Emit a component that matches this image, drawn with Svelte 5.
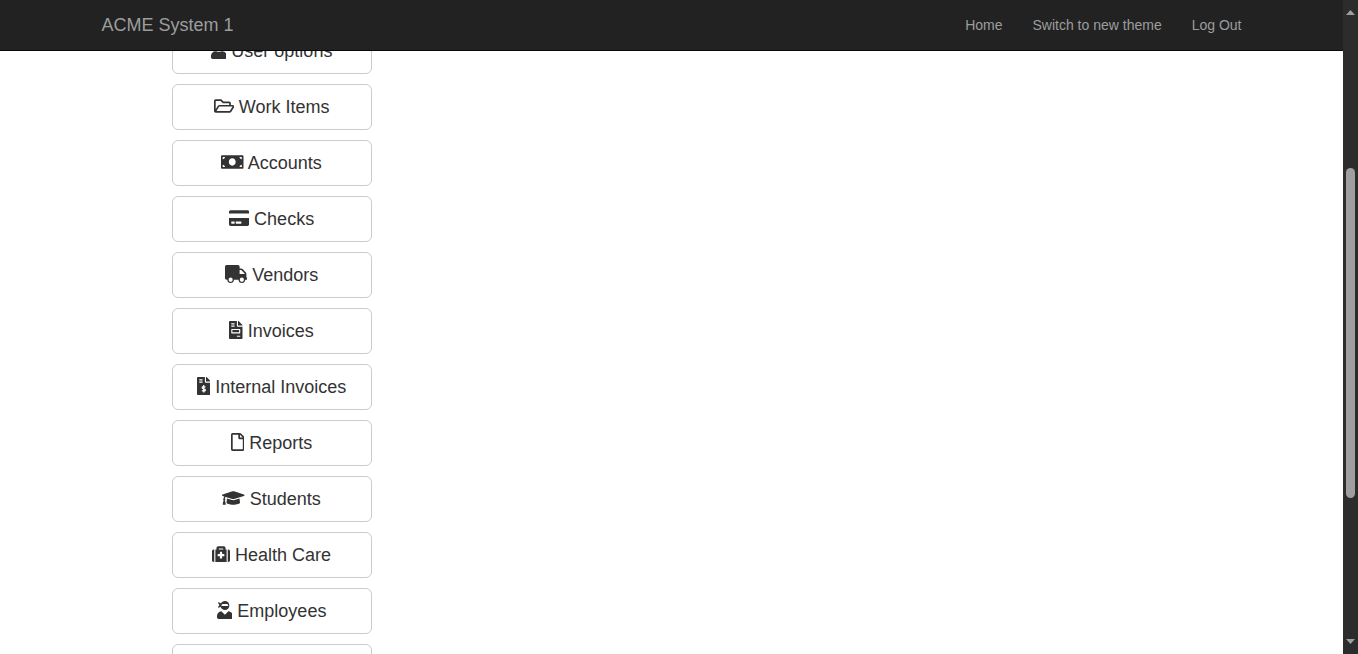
<script>
  const links = ['Home', 'Switch to new theme', 'Log Out'];

  const items = [
    { label: 'User options', w: 448, d: 'M224 256c70.7 0 128-57.3 128-128S294.7 0 224 0 96 57.3 96 128s57.3 128 128 128zm89.6 32h-16.7c-22.2 10.2-46.9 16-72.9 16s-50.6-5.8-72.9-16h-16.7C60.2 288 0 348.2 0 422.4V464c0 26.5 21.5 48 48 48h352c26.5 0 48-21.5 48-48v-41.6c0-74.2-60.2-134.4-134.4-134.4z' },
    { label: 'Work Items', w: 576, d: 'M527.9 224H480v-48c0-26.5-21.5-48-48-48H272l-64-64H48C21.5 64 0 85.5 0 112v288c0 26.5 21.5 48 48 48h400c16.5 0 31.9-8.5 40.7-22.6l79.9-128c20-31.9-3-73.4-40.7-73.4zM48 118c0-3.3 2.7-6 6-6h134.1l64 64H426c3.3 0 6 2.7 6 6v42H152c-16.8 0-32.4 8.8-41.1 23.2L48 351.4zm400 282H72l77.2-128H528z' },
    { label: 'Accounts', w: 640, d: 'M608 64H32C14.33 64 0 78.33 0 96v320c0 17.67 14.33 32 32 32h576c17.67 0 32-14.33 32-32V96c0-17.67-14.33-32-32-32zM48 400v-64c35.35 0 64 28.65 64 64H48zm0-224v-64h64c0 35.35-28.65 64-64 64zm272 184c-55 0-98-46-98-104s43-104 98-104 98 46 98 104-43 104-98 104zm272 40h-64c0-35.35 28.65-64 64-64v64zm0-224c-35.35 0-64-28.65-64-64h64v64z' },
    { label: 'Checks', w: 576, d: 'M0 432c0 26.5 21.5 48 48 48h480c26.5 0 48-21.5 48-48V256H0v176zm192-68c0-6.6 5.4-12 12-12h136c6.6 0 12 5.4 12 12v40c0 6.6-5.4 12-12 12H204c-6.6 0-12-5.4-12-12v-40zm-128 0c0-6.6 5.4-12 12-12h72c6.6 0 12 5.4 12 12v40c0 6.6-5.4 12-12 12H76c-6.6 0-12-5.4-12-12v-40zM576 80v48H0V80c0-26.5 21.5-48 48-48h480c26.5 0 48 21.5 48 48z' },
    { label: 'Vendors', w: 640, d: 'M624 352h-16V243.9c0-12.7-5.1-24.9-14.1-33.9L494 110.1c-9-9-21.2-14.1-33.9-14.1H416V48c0-26.5-21.5-48-48-48H48C21.5 0 0 21.5 0 48v320c0 26.5 21.5 48 48 48h16c0 53 43 96 96 96s96-43 96-96h128c0 53 43 96 96 96s96-43 96-96h48c8.8 0 16-7.2 16-16v-32c0-8.8-7.2-16-16-16zM160 474c-32 0-58-26-58-58s26-58 58-58 58 26 58 58-26 58-58 58zm320 0c-32 0-58-26-58-58s26-58 58-58 58 26 58 58-26 58-58 58zm80-218H416V144h44.1l99.9 99.9V256z' },
    { label: 'Invoices', w: 384, d: 'M288 256H96v64h192v-64zm89-151L279.1 7c-4.5-4.5-10.6-7-17-7H256v128h128v-6.1c0-6.3-2.5-12.4-7-16.9zm-153 31V0H24C10.7 0 0 10.7 0 24v464c0 13.3 10.7 24 24 24h336c13.3 0 24-10.7 24-24V160H248c-13.2 0-24-10.8-24-24zM64 72c0-4.42 3.58-8 8-8h80c4.42 0 8 3.58 8 8v16c0 4.42-3.58 8-8 8H72c-4.42 0-8-3.58-8-8V72zm0 64c0-4.42 3.58-8 8-8h80c4.42 0 8 3.58 8 8v16c0 4.42-3.58 8-8 8H72c-4.42 0-8-3.58-8-8v-16zm256 304c0 4.42-3.58 8-8 8h-80c-4.42 0-8-3.58-8-8v-16c0-4.42 3.58-8 8-8h80c4.42 0 8 3.58 8 8v16zm0-200v96c0 8.84-7.16 16-16 16H80c-8.84 0-16-7.16-16-16v-96c0-8.84 7.16-16 16-16h224c8.84 0 16 7.16 16 16z' },
    { label: 'Internal Invoices', w: 384, cut: 'M238 290c-28-24-92-20-92 14 0 38 94 26 94 66 0 36-68 40-100 14M192 226v218', d: 'M377 105L279.1 7c-4.5-4.5-10.6-7-17-7H256v128h128v-6.1c0-6.3-2.5-12.4-7-16.9zm-153 31V0H24C10.7 0 0 10.7 0 24v464c0 13.3 10.7 24 24 24h336c13.3 0 24-10.7 24-24V160H248c-13.2 0-24-10.8-24-24zM64 72c0-4.42 3.58-8 8-8h80c4.42 0 8 3.58 8 8v16c0 4.42-3.58 8-8 8H72c-4.42 0-8-3.58-8-8V72zm0 80v-16c0-4.42 3.58-8 8-8h80c4.42 0 8 3.58 8 8v16c0 4.42-3.58 8-8 8H72c-4.42 0-8-3.58-8-8z' },
    { label: 'Reports', w: 384, d: 'M369.9 97.9L286 14C277 5 264.8-.1 252.1-.1H48C21.5 0 0 21.5 0 48v416c0 26.5 21.5 48 48 48h288c26.5 0 48-21.5 48-48V131.9c0-12.7-5.1-25-14.1-34zM332.1 128H256V51.9l76.1 76.1zM48 464V48h160v104c0 13.3 10.7 24 24 24h104v288H48z' },
    { label: 'Students', w: 640, d: 'M622.34 153.2L343.4 67.5c-15.2-4.67-31.6-4.67-46.79 0L17.66 153.2c-23.54 7.23-23.54 38.36 0 45.59l48.63 14.94c-10.67 13.19-17.23 29.28-17.88 46.9C38.78 266.15 32 276.11 32 288c0 10.78 5.68 19.85 13.86 25.65L20.33 428.53C18.11 438.52 25.71 448 35.94 448h56.11c10.24 0 17.84-9.48 15.62-19.47L82.14 313.65C90.32 307.85 96 298.78 96 288c0-11.57-6.47-21.25-15.66-26.87.76-15.02 8.44-28.3 20.69-36.72L296.6 284.5c9.06 2.78 26.44 6.25 46.79 0l278.95-85.7c23.55-7.24 23.55-38.36 0-45.6zM352.79 315.09c-28.53 8.76-52.84 3.92-65.59 0l-145.02-44.55L128 384c0 35.35 85.96 64 192 64s192-28.65 192-64l-14.18-113.47-145.03 44.56z' },
    { label: 'Health Care', w: 512, d: 'M96 480h320V128h-32V80c0-26.51-21.49-48-48-48H176c-26.51 0-48 21.49-48 48v48H96v352zm96-384h128v32H192V96zm320 80v256c0 26.51-21.49 48-48 48h-16V128h16c26.51 0 48 21.49 48 48zM64 480H48c-26.51 0-48-21.49-48-48V176c0-26.51 21.49-48 48-48h16v352zm288-208v32c0 8.837-7.163 16-16 16h-48v48c0 8.837-7.163 16-16 16h-32c-8.837 0-16-7.163-16-16v-48h-48c-8.837 0-16-7.163-16-16v-32c0-8.837 7.163-16 16-16h48v-48c0-8.837 7.163-16 16-16h32c8.837 0 16 7.163 16 16v48h48c8.837 0 16 7.163 16 16z' },
    { label: 'Employees', w: 448, d: 'M325.4 289.2L224 390.6 122.6 289.2C54 295.3 0 352.2 0 422.4V464c0 26.5 21.5 48 48 48h352c26.5 0 48-21.5 48-48v-41.6c0-70.2-54-127.1-122.6-133.2zM32 192c27.3 0 51.8-11.5 69.2-29.7 15.1 53.9 64 93.7 122.8 93.7 70.7 0 128-57.3 128-128S294.7 0 224 0c-50.4 0-93.6 29.4-114.5 71.8C92.1 47.8 64 32 32 32c0 33.4 17.1 62.8 43.1 80-26 17.2-43.1 46.6-43.1 80zm132-106h120c20 0 36 20 36 54H128c0-34 16-54 36-54z' },
    { label: '', name: 'More', w: 512, d: '' }
  ];
</script>

<div class="window">
  <div class="page">
    <header class="navbar">
      <div class="container bar">
        <a class="brand" href="#top">ACME System 1</a>
        <nav>
          {#each links as link}
            <a href="#top">{link}</a>
          {/each}
        </nav>
      </div>
    </header>
    <main class="container">
      <div class="menu">
        {#each items as item}
          <button type="button" aria-label={item.name}>
            <svg viewBox="0 0 {item.w} 512" aria-hidden="true">
              <path d={item.d} />
              {#if item.cut}<path class="cut" d={item.cut} />{/if}
            </svg>
            {item.label}
          </button>
        {/each}
      </div>
    </main>
  </div>
  <div class="scrollbar" aria-hidden="true">
    <svg viewBox="0 0 15 16"><path d="M3 15L7.5 10L12 15z" /></svg>
    <div class="track">
      <div class="thumb"></div>
    </div>
    <svg viewBox="0 0 15 16"><path d="M3 1L7.5 6L12 1z" /></svg>
  </div>
</div>

<style>
  :global(body) {
    background: #fff;
  }

  .window {
    display: flex;
    height: 100vh;
    overflow: hidden;
    font-family: "Liberation Sans", Arial, sans-serif;
    color: #333;
  }

  .page {
    display: flex;
    flex-direction: column;
    flex: 1;
    min-width: 0;
  }

  .container {
    box-sizing: border-box;
    width: 100%;
    max-width: 1170px;
    margin: 0 auto;
    padding: 0 15px;
  }

  .navbar {
    position: relative;
    z-index: 1;
    flex: none;
    background: #222;
    border-bottom: 1px solid #080808;
  }

  .bar {
    display: flex;
    align-items: center;
    justify-content: space-between;
    height: 50px;
  }

  .bar a {
    color: #9d9d9d;
    text-decoration: none;
    line-height: 20px;
  }

  .bar .brand {
    font-size: 18px;
  }

  nav {
    display: flex;
    gap: 30px;
    font-size: 14px;
  }

  /* The list is scrolled partly beneath the navbar. */
  .menu {
    display: flex;
    flex-direction: column;
    gap: 10px;
    width: 200px;
    margin: -23px 0 0 70px;
  }

  button {
    box-sizing: border-box;
    height: 46px;
    padding: 0 16px;
    border: 1px solid #ccc;
    border-radius: 6px;
    background: #fff;
    color: #333;
    font: 18px/24px "Liberation Sans", Arial, sans-serif;
    white-space: nowrap;
    cursor: pointer;
  }

  button svg {
    height: 18px;
    vertical-align: -2px;
    fill: currentColor;
  }

  .cut {
    fill: none;
    stroke: #fff;
    stroke-width: 34px;
  }

  .scrollbar {
    display: flex;
    flex-direction: column;
    flex: none;
    width: 15px;
    background: #2c2c2c;
  }

  .scrollbar svg {
    width: 15px;
    height: 16px;
    fill: #9f9f9f;
  }

  .track {
    display: grid;
    grid-template-rows: 152fr 330fr 140fr;
    flex: 1;
    padding: 0 3px;
  }

  .thumb {
    grid-row: 2;
    border-radius: 5px;
    background: #9f9f9f;
  }
</style>
